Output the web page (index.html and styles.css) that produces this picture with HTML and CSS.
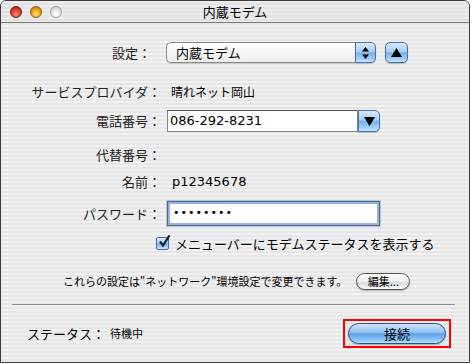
FILE: index.html
```html
<!DOCTYPE html>
<html lang="ja">
<head>
  <meta charset="UTF-8">
  <title>内蔵モデム</title>
  <link rel="stylesheet" href="styles.css">
</head>
<body>

  <div class="window">
    <div class="titlebar">
      <div class="lights">
        <span class="light red"></span>
        <span class="light yellow"></span>
        <span class="light off"></span>
      </div>
      <div class="title">内蔵モデム</div>
    </div>

    <div class="content">
      <div class="row row-config">
        <label class="lbl lbl-config">設定：</label>
        <div class="popup">
          <span class="popup-text">内蔵モデム</span>
          <span class="popup-arrows">
            <svg width="9" height="12" viewBox="0 0 9 12"><path d="M4.5 0 L8 4.5 H1 Z M1 7.5 H8 L4.5 12 Z" fill="#000"/></svg>
          </span>
        </div>
        <span class="aqua-sq">
          <svg width="11" height="9" viewBox="0 0 11 9"><path d="M5.5 0 L11 9 H0 Z" fill="#000"/></svg>
        </span>
      </div>

      <div class="row row-provider">
        <label class="lbl">サービスプロバイダ：</label>
        <span class="value">晴れネット岡山</span>
      </div>

      <div class="row row-phone">
        <label class="lbl">電話番号：</label>
        <div class="combo">
          <span class="combo-field">086-292-8231</span>
          <span class="combo-btn">
            <svg width="11" height="9" viewBox="0 0 11 9"><path d="M0 0 H11 L5.5 9 Z" fill="#000"/></svg>
          </span>
        </div>
      </div>

      <div class="row row-alt">
        <label class="lbl">代替番号：</label>
      </div>

      <div class="row row-name">
        <label class="lbl">名前：</label>
        <span class="value value-name">p12345678</span>
      </div>

      <div class="row row-pass">
        <label class="lbl">パスワード：</label>
        <div class="pass-field">••••••••</div>
      </div>

      <div class="row row-check">
        <span class="checkbox">
          <svg width="14" height="14" viewBox="0 0 14 14"><path d="M3 6.5 L6 10.5 L12.5 0.5" fill="none" stroke="#10203a" stroke-width="2.2"/></svg>
        </span>
        <span class="check-label">メニューバーにモデムステータスを表示する</span>
      </div>

      <div class="row row-note">
        <span class="note">これらの設定は"ネットワーク"環境設定で変更できます。</span>
        <button class="btn-small">編集...</button>
      </div>

      <div class="sep"></div>

      <div class="row row-status">
        <span class="status-lbl">ステータス：</span>
        <span class="status-val">待機中</span>
        <span class="connect-wrap">
          <button class="btn-connect">接続</button>
        </span>
      </div>
    </div>
  </div>

</body>
</html>
```

FILE: styles.css
```css
body {
  margin: 0;
  padding: 0;
  background: #fff;
  font-family: 'DejaVu Sans', 'Noto Sans CJK JP', sans-serif;
  font-size: 13px;
  color: #000;
}

.window {
  width: 468px;
  height: 361px;
  border: 1px solid #3c3c3c;
  border-radius: 6px 6px 0 0;
  overflow: hidden;
  background: repeating-linear-gradient(to bottom, #f1f1f1 0 2px, #e6e6e6 2px 4px);
}

.titlebar {
  height: 21px;
  border-bottom: 1px solid #777;
  display: flex;
  align-items: center;
  position: relative;
  background: repeating-linear-gradient(to bottom, #ececec 0 2px, #e1e1e1 2px 4px);
}

.lights {
  display: flex;
  gap: 8px;
  padding-left: 9px;
  padding-top: 1px;
}

.light {
  width: 12px;
  height: 12px;
  border-radius: 50%;
  box-sizing: border-box;
}

.light.red {
  background: radial-gradient(circle at 50% 70%, #ff9a8a 0, #e8402e 45%, #a01808 100%);
  border: 1px solid #7a1a10;
}

.light.yellow {
  background: radial-gradient(circle at 50% 70%, #ffe58a 0, #f5a818 45%, #b86a00 100%);
  border: 1px solid #8a5a10;
}

.light.off {
  background: radial-gradient(circle at 50% 70%, #ffffff 0, #e6e6e6 50%, #bdbdbd 100%);
  border: 1px solid #a0a0a0;
}

.title {
  position: absolute;
  left: 0;
  right: 0;
  top: 0;
  line-height: 21px;
  text-align: center;
  font-family: 'Noto Sans CJK JP', sans-serif;
  font-size: 13px;
}

.content {
  padding-top: 15px;
}

.row {
  display: flex;
  align-items: center;
}

.lbl {
  width: 160px;
  text-align: right;
  font-family: 'Noto Sans CJK JP', sans-serif;
  font-size: 13px;
  line-height: 16px;
  color: #222;
  flex-shrink: 0;
}

.lbl-config {
  padding-right: 10px;
  box-sizing: border-box;
}

.row-config { height: 29px; }
.row-provider { height: 30px; margin-top: 10px; }
.row-phone { height: 28px; }
.row-alt { height: 30px; margin-top: 5px; }
.row-name { height: 24px; }
.row-pass { height: 27px; margin-top: 6px; }
.row-check { height: 19px; margin-top: 7px; padding-left: 155px; }
.row-note { height: 22px; margin-top: 17px; padding-left: 62px; }
.row-status { height: 28px; margin-top: 14px; padding-left: 26px; }

/* popup */
.popup {
  margin-left: 5px;
  width: 210px;
  height: 21px;
  display: flex;
  box-sizing: border-box;
}

.popup-text {
  flex: 1;
  border: 1px solid #8a8a8a;
  border-right: none;
  border-radius: 5px 0 0 5px;
  background: linear-gradient(to bottom, #ffffff 0%, #f6f6f6 50%, #ececec 100%);
  padding-left: 9px;
  font-family: 'Noto Sans CJK JP', sans-serif;
  line-height: 19px;
  box-shadow: 0 1px 1px rgba(0,0,0,0.15);
}

.popup-arrows,
.aqua-sq,
.combo-btn {
  display: flex;
  align-items: center;
  justify-content: center;
  box-sizing: border-box;
  border: 1px solid #4b6ea6;
  background: linear-gradient(to bottom, #d7e9fc 0%, #a9cff4 45%, #78b2ec 52%, #9fd0fa 85%, #c6e6ff 100%);
  box-shadow: 0 1px 1px rgba(0,0,0,0.2);
}

.popup-arrows {
  width: 21px;
  border-radius: 0 5px 5px 0;
}

.aqua-sq {
  margin-left: 9px;
  width: 23px;
  height: 21px;
  border-radius: 5px;
}

.value {
  margin-left: 10px;
  font-family: 'Noto Sans CJK JP', sans-serif;
  font-size: 12px;
  line-height: 16px;
}

.value-name {
  margin-left: 11px;
  font-family: 'DejaVu Sans', sans-serif;
  font-size: 13px;
}

/* combo */
.combo {
  margin-left: 6px;
  display: flex;
  height: 22px;
}

.combo-field {
  width: 191px;
  box-sizing: border-box;
  background: #fff;
  border: 1px solid #888;
  border-top-color: #555;
  padding-left: 2px;
  line-height: 20px;
  font-size: 13px;
}

.combo-btn {
  width: 22px;
  border-radius: 0 5px 5px 0;
}

/* password */
.pass-field {
  margin-left: 6px;
  width: 213px;
  height: 25px;
  box-sizing: border-box;
  background: #fff;
  border: 1px solid #666;
  box-shadow: 0 0 0 2px #8fb4e6 inset, 0 0 0 1px #a9c6ee;
  padding-left: 5px;
  line-height: 22px;
  font-size: 11px;
  letter-spacing: 1px;
}

/* checkbox */
.checkbox {
  position: relative;
  width: 13px;
  height: 13px;
  box-sizing: border-box;
  border: 1px solid #4b6ea6;
  border-radius: 2px;
  background: linear-gradient(to bottom, #d7e9fc 0%, #a9cff4 45%, #78b2ec 52%, #bfe2ff 100%);
}

.checkbox svg {
  position: absolute;
  left: 0;
  top: -3px;
}

.check-label {
  margin-left: 6px;
  font-family: 'Noto Sans CJK JP', sans-serif;
  font-size: 13px;
  line-height: 16px;
}

.note {
  font-family: 'Noto Sans CJK JP', sans-serif;
  font-size: 11px;
}

.btn-small {
  margin-left: 9px;
  width: 54px;
  height: 17px;
  padding: 0;
  border: 1px solid #555;
  border-radius: 9px;
  background: linear-gradient(to bottom, #ffffff 0%, #eeeeee 50%, #dcdcdc 55%, #f4f4f4 100%);
  font-family: 'Noto Sans CJK JP', sans-serif;
  font-size: 11px;
  line-height: 15px;
  color: #000;
  box-shadow: 0 1px 1px rgba(0,0,0,0.25);
}

.sep {
  margin: 12px 14px 0 11px;
  height: 1px;
  background: #8c8c8c;
}

.status-lbl {
  font-family: 'Noto Sans CJK JP', sans-serif;
  font-size: 13px;
  width: 83px;
}

.status-val {
  font-family: 'Noto Sans CJK JP', sans-serif;
  font-size: 11px;
}

.connect-wrap {
  margin-left: auto;
  margin-right: 18px;
  border: 2px solid #ff0000;
  padding: 2px 3px;
  display: flex;
}

.btn-connect {
  width: 98px;
  height: 21px;
  padding: 0;
  border: 1px solid #2b4c86;
  border-radius: 11px;
  background: linear-gradient(to bottom, #cfe4fb 0%, #8fbff0 45%, #5e9de6 52%, #8ccaf9 85%, #b8e3ff 100%);
  font-family: 'Noto Sans CJK JP', sans-serif;
  font-size: 13px;
  line-height: 19px;
  color: #000;
  box-shadow: 0 1px 2px rgba(0,0,0,0.3);
}
```
